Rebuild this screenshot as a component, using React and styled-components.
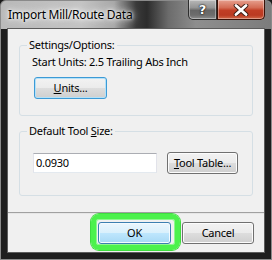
import React from "react";
import styled, { createGlobalStyle } from "styled-components";

const Global = createGlobalStyle`
  html, body { margin: 0; padding: 0; background: #1a1a1a; }
  body { font-family: "Noto Sans", "Open Sans", sans-serif; font-size: 11px; letter-spacing: -0.25px; color: #000; }
  * { box-sizing: border-box; }
`;

const Window = styled.div`
  width: 272px;
  height: 260px;
  display: flex;
  flex-direction: column;
  border-radius: 6px 6px 0 0;
  background:
    linear-gradient(to right, #b9b9b9 0%, #c4c4c4 30%, #a8a8a8 42%, #3a3a3a 50%, #2c2c2c 54%, #6c6c6c 62%, #8e8e8e 72%, #7c7c7c 100%) top / 100% 29px no-repeat,
    #1e1e1e;
  box-shadow: inset 0 0 0 1px #8a8a8a;
`;

const TitleBar = styled.div`
  height: 29px;
  flex: none;
  display: flex;
  align-items: flex-start;
  padding: 0 7px 0 8px;
`;

const Title = styled.div`
  flex: 1;
  margin-top: 7px;
  font-size: 12px;
  line-height: 16px;
  white-space: nowrap;
  text-shadow: 0 0 6px #fff, 0 0 3px #fff, 0 0 10px rgba(255,255,255,0.9);
`;

const CaptionButtons = styled.div`
  display: flex;
  height: 20px;
`;

const CaptionButton = styled.div`
  height: 20px;
  width: ${(p) => p.$w}px;
  display: flex;
  align-items: center;
  justify-content: center;
  border: 1px solid ${(p) => (p.$close ? "#3b1208" : "#2e2e2e")};
  border-top: none;
  border-radius: ${(p) => (p.$close ? "0 0 5px 0" : "0 0 0 5px")};
  background: ${(p) =>
    p.$close
      ? "linear-gradient(#e7a08f 0%, #d46c55 40%, #c13e25 55%, #bb3a22 80%, #d06a4a 100%)"
      : "linear-gradient(#b8b8b8 0%, #949494 40%, #666 55%, #6e6e6e 80%, #8e8e8e 100%)"};
  box-shadow: inset 0 0 0 1px rgba(255,255,255,0.35);
  color: #fff;
  font-family: "DejaVu Sans", sans-serif;
  font-weight: bold;
  font-size: 13px;
  letter-spacing: 0;
  text-shadow: 0 0 2px #000, 0 0 1px #000;
`;

const Client = styled.div`
  flex: 1;
  margin: 0 8px 8px 8px;
  background: #f0f0f0;
  display: flex;
  flex-direction: column;
  box-shadow: 0 0 0 1px #5c5c5c;
`;

const Upper = styled.div`
  height: 183px;
  padding: 16px 11px 0 11px;
  display: flex;
  flex-direction: column;
  gap: 15px;
`;

const GroupBox = styled.div`
  position: relative;
  border: 1px solid #d5dfe5;
  border-radius: 3px;
  padding: ${(p) => p.$pad};
  display: flex;
  flex-direction: ${(p) => p.$dir || "column"};
  align-items: flex-start;
  gap: ${(p) => p.$gap || 0}px;
`;

const Caption = styled.span`
  position: absolute;
  top: -9px;
  left: 7px;
  padding: 0 2px;
  background: #f0f0f0;
  line-height: 16px;
  white-space: nowrap;
`;

const Label = styled.div`
  line-height: 16px;
  white-space: nowrap;
`;

const Row = styled.div`
  display: flex;
  align-items: center;
  gap: 10px;
`;

const variants = {
  normal: {
    border: "#707070",
    bg: "linear-gradient(#f2f2f2 0%, #ebebeb 50%, #dddddd 51%, #cfcfcf 100%)",
    inner: "#fcfcfc",
  },
  focused: {
    border: "#3c9ad6",
    bg: "linear-gradient(#f2f2f2 0%, #ebebeb 50%, #dddddd 51%, #cfcfcf 100%)",
    inner: "#b4e1f8",
  },
  default: {
    border: "#3c7fb1",
    bg: "linear-gradient(#eaf6fd 0%, #d9f0fc 50%, #bee6fd 51%, #a7d9f5 100%)",
    inner: "#f4fbff",
  },
};

const Button = styled.button`
  position: relative;
  width: ${(p) => p.$w}px;
  height: 22px;
  margin: 0 0 0 ${(p) => p.$ml || 0}px;
  padding: 0;
  font: inherit;
  letter-spacing: inherit;
  color: #000;
  border: 1px solid ${(p) => variants[p.$variant || "normal"].border};
  border-radius: 3px;
  background: ${(p) => variants[p.$variant || "normal"].bg};
  box-shadow: inset 0 0 0 1px ${(p) => variants[p.$variant || "normal"].inner};
  line-height: 18px;
  text-align: center;
  white-space: nowrap;
`;

const Highlight = styled.span`
  position: absolute;
  left: -8px;
  top: -9px;
  right: -10px;
  bottom: -7px;
  border: 5px solid #4cf24c;
  border-radius: 8px;
  box-shadow: inset 0 0 0 1px #8ff78f, 0 0 0 1px #3fdc3f;
  pointer-events: none;
`;

const TextBox = styled.div`
  width: 124px;
  height: 20px;
  background: #fff;
  border: 1px solid #dbdfe6;
  border-top-color: #abadb3;
  border-left-color: #e2e3ea;
  border-right-color: #e2e3ea;
  border-bottom-color: #e3e9ef;
  padding-left: 2px;
  line-height: 17px;
`;

const Separator = styled.div`
  height: 2px;
  flex: none;
  border-top: 1px solid #a0a0a0;
  background: #e6e6e6;
`;

const ButtonBar = styled.div`
  flex: 1;
  display: flex;
  justify-content: flex-end;
  align-items: flex-start;
  gap: 11px;
  padding: 8px 10px 0 0;
`;

const U = styled.span`
  text-decoration: underline;
`;

function CloseGlyph() {
  return (
    <svg width="16" height="12" viewBox="0 0 16 12">
      <path d="M3 1.5 L13 10.5 M13 1.5 L3 10.5" stroke="#3a1a12" strokeWidth="4.6" strokeLinecap="round" />
      <path d="M3 1.5 L13 10.5 M13 1.5 L3 10.5" stroke="#fff" strokeWidth="2.8" strokeLinecap="round" />
    </svg>
  );
}

export default function App() {
  return (
    <>
      <Global />
      <Window>
        <TitleBar>
          <Title>Import Mill/Route Data</Title>
          <CaptionButtons>
            <CaptionButton $w={29}>?</CaptionButton>
            <CaptionButton $w={48} $close>
              <CloseGlyph />
            </CaptionButton>
          </CaptionButtons>
        </TitleBar>
        <Client>
          <Upper>
            <GroupBox $pad="8px 0 16px 12px" $gap={7}>
              <Caption>Settings/Options:</Caption>
              <Label>Start Units: 2.5 Trailing Abs Inch</Label>
              <Button $w={73} $ml={2} $variant="focused">
                <U>U</U>nits...
              </Button>
            </GroupBox>
            <GroupBox $pad="20px 0 21px 13px">
              <Caption>
                Default Tool <U>S</U>ize:
              </Caption>
              <Row>
                <TextBox>0.0930</TextBox>
                <Button $w={71}>
                  <U>T</U>ool Table...
                </Button>
              </Row>
            </GroupBox>
          </Upper>
          <Separator />
          <ButtonBar>
            <Button $w={73} $variant="default">
              OK
              <Highlight />
            </Button>
            <Button $w={72}>Cancel</Button>
          </ButtonBar>
        </Client>
      </Window>
    </>
  );
}
